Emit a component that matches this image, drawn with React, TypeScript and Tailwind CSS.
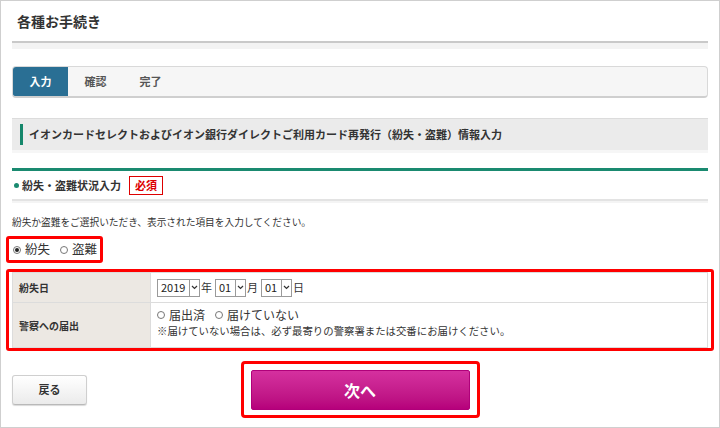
import React from "react";

const font = "font-['Noto_Sans_CJK_JP','Noto_Sans',sans-serif]";

function Radio({ checked, label, size = "text-[12px]" }: { checked?: boolean; label: string; size?: string }) {
  return (
    <span className={`inline-flex items-center gap-[4px] ${size} text-[#333]`}>
      <span className="w-[8px] h-[8px] rounded-full border border-[#777] bg-white flex items-center justify-center">
        {checked && <span className="w-[4px] h-[4px] rounded-full bg-[#222]" />}
      </span>
      {label}
    </span>
  );
}

function Select({ value, w }: { value: string; w: string }) {
  return (
    <span className={`inline-flex items-stretch h-[18px] ${w} border border-[#9a9a9a] bg-white`}>
      <span className="flex-1 flex items-center pl-[3px] text-[11px] leading-none text-[#222]">{value}</span>
      <span className="w-[10px] border-l border-[#9a9a9a] flex items-center justify-center bg-white">
        <svg width="7" height="5" viewBox="0 0 7 5">
          <path d="M1 1 L3.5 3.5 L6 1" fill="none" stroke="#333" strokeWidth="1.2" />
        </svg>
      </span>
    </span>
  );
}

export default function App() {
  return (
    <div className={`w-[720px] h-[428px] border border-[#cfcfcf] bg-white overflow-hidden ${font} text-[#333]`}>
      <div className="px-[11px]">
        {/* Title */}
        <div className="h-[40px] flex items-center pl-[5px]">
          <h1 className="text-[14px] font-bold text-[#333]">各種お手続き</h1>
        </div>
        <div className="h-[8px] border-t-2 border-[#c9c9c9] bg-[#f3f3f3]" />

        {/* Steps */}
        <div className="mt-[17px] h-[32px] flex border border-[#d9d9d9] border-b-2 border-b-[#cfcfcf] rounded-[4px] bg-[#f6f6f6] overflow-hidden">
          <div className="w-[55px] flex items-center justify-center bg-[#2a6f94] text-white text-[11px] font-bold">入力</div>
          <div className="w-[55px] flex items-center justify-center text-[#555] text-[11px] font-bold">確認</div>
          <div className="w-[55px] flex items-center justify-center text-[#555] text-[11px] font-bold">完了</div>
        </div>

        {/* Page heading */}
        <div className="mt-[20px] h-[32px] flex items-center border-t border-[#dcdcdc] bg-[#ebebeb] pl-[8px]">
          <span className="w-[3px] h-[21px] bg-[#15876b] mr-[6px]" />
          <h2 className="text-[11px] font-bold text-[#333]">
            イオンカードセレクトおよびイオン銀行ダイレクトご利用カード再発行（紛失・盗難）情報入力
          </h2>
        </div>
        <div className="h-[3px] bg-[#f6f6f6]" />

        {/* Section */}
        <div className="mt-[15px] border-t-[3px] border-[#1a8a70]" />
        <div className="h-[28px] flex items-center gap-[8px] pl-[2px]">
          <span className="flex items-center gap-[3px] text-[11px] font-bold text-[#333]">
            <span className="w-[5px] h-[5px] rounded-full bg-[#1a8a70]" />
            紛失・盗難状況入力
          </span>
          <span className="h-[19px] px-[5px] flex items-center border border-[#d00] text-[#d00] text-[11px] font-bold bg-white">必須</span>
        </div>
        <div className="h-[4px] border-t-2 border-[#e3e3e3] bg-[#f4f4f4]" />

        <p className="mt-[11px] h-[16px] leading-[16px] text-[9.7px] text-[#333]">
          紛失か盗難をご選択いただき、表示された項目を入力してください。
        </p>

        {/* Radio choice */}
        <div className="mt-[6px] -ml-[6px] w-[97px] h-[27px] border-[3px] border-[#ff0000] rounded-[3px] flex items-center gap-[10px] pl-[4px]">
          <Radio checked label="紛失" size="text-[12.5px]" />
          <Radio label="盗難" size="text-[12.5px]" />
        </div>

        {/* Table */}
        <div className="mt-[6px] -mx-[6px] border-[3px] border-[#ff0000] rounded-[3px] px-[3px]">
          <table className="w-full border-collapse">
            <tbody>
              <tr className="h-[30px]">
                <th className="w-[138px] bg-[#ece8e3] border border-[#dcdcdc] text-left pl-[6px] text-[10px] font-bold text-[#333]">紛失日</th>
                <td className="border border-[#dcdcdc] pl-[6px]">
                  <span className="flex items-center text-[11px] text-[#333]">
                    <Select value="2019" w="w-[43px]" />
                    <span className="ml-[1px] mr-[3px]">年</span>
                    <Select value="01" w="w-[31px]" />
                    <span className="ml-[1px] mr-[3px]">月</span>
                    <Select value="01" w="w-[31px]" />
                    <span className="ml-[1px]">日</span>
                  </span>
                </td>
              </tr>
              <tr className="h-[45px]">
                <th className="bg-[#ece8e3] border border-[#dcdcdc] text-left pl-[6px] text-[10px] font-bold text-[#333]">警察への届出</th>
                <td className="border border-[#dcdcdc] pl-[6px] align-top pt-[4px]">
                  <div className="flex items-center gap-[10px] h-[16px]">
                    <Radio label="届出済" />
                    <Radio label="届けていない" />
                  </div>
                  <p className="text-[10.4px] leading-[16px] text-[#333]">
                    ※届けていない場合は、必ず最寄りの警察署または交番にお届けください。
                  </p>
                </td>
              </tr>
            </tbody>
          </table>
        </div>

        {/* Buttons */}
        <div className="mt-[10px] grid grid-cols-[1fr_239px_1fr] items-center">
          <div>
            <button className="w-[75px] h-[30px] rounded-[3px] border border-[#cfcfcf] border-b-[#b9b9b9] bg-gradient-to-b from-white to-[#ebebeb] text-[11px] font-bold text-[#333] shadow-[0_1px_1px_rgba(0,0,0,0.15)]">
              戻る
            </button>
          </div>
          <div className="h-[57px] border-[3px] border-[#ff0000] rounded-[4px] pl-[7px] pr-[7px] pt-[6px]">
            <button className="w-full h-[40px] rounded-[2px] border border-[#b0007a] bg-gradient-to-b from-[#d5309f] to-[#b6007b] text-white text-[16px] font-bold">
              次へ
            </button>
          </div>
          <div />
        </div>
      </div>
    </div>
  );
}
